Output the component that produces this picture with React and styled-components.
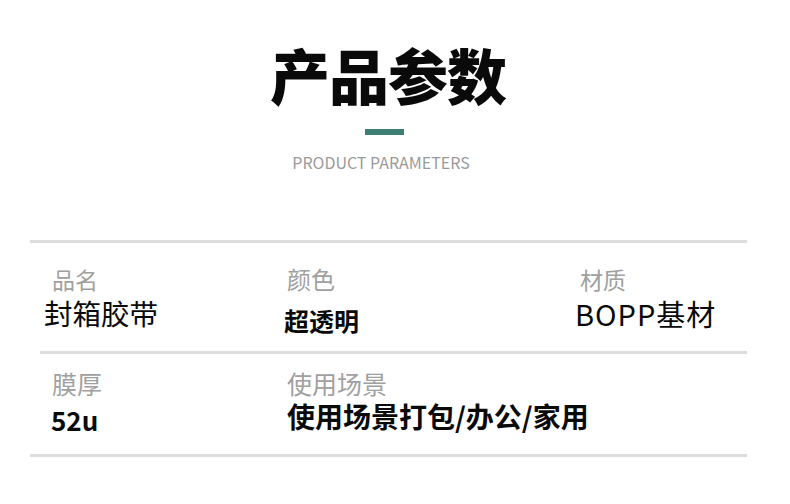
import React from "react";
import styled, { createGlobalStyle } from "styled-components";

const Global = createGlobalStyle`
  html, body { margin: 0; padding: 0; background: #ffffff; }
  body { font-family: "Noto Sans CJK SC", "Noto Sans", sans-serif; color: #111; }
`;

const Page = styled.div`
  width: 790px;
  height: 504px;
  background: #fff;
  overflow: hidden;
`;

const Header = styled.header`
  display: flex;
  flex-direction: column;
  align-items: center;
  padding: 44px 14px 0 0;
`;

const Title = styled.h1`
  margin: 0;
  font-size: 60px;
  line-height: 60px;
  font-weight: 900;
  color: #0a0a0a;
  letter-spacing: -1px;
`;

const Accent = styled.div`
  width: 39px;
  height: 6px;
  background: #3e7e74;
  margin: 25px 8px 0 0;
`;

const Subtitle = styled.div`
  margin: 17px 14px 0 0;
  font-size: 16px;
  line-height: 20px;
  font-weight: 400;
  color: #9a9a9a;
`;

const Table = styled.section`
  margin: 68px 0 0 30px;
  width: 717px;
`;

const Divider = styled.div`
  height: 3px;
  background: #dddddd;
  margin-left: ${(p) => p.$shift || 0}px;
`;

const Row = styled.div`
  display: grid;
  grid-template-columns: 257px 293px 1fr;
  height: ${(p) => p.$h}px;
  padding-top: ${(p) => p.$pt}px;
  box-sizing: border-box;
`;

const Cell = styled.div`
  display: flex;
  flex-direction: column;
  align-items: flex-start;
  grid-column: ${(p) => p.$span || "auto"};
`;

const Label = styled.div`
  font-size: ${(p) => p.$size || 23}px;
  line-height: 30px;
  color: #a0a0a0;
  font-weight: 400;
  white-space: nowrap;
  margin-left: ${(p) => p.$dx || 0}px;
`;

const Value = styled.div`
  font-size: ${(p) => p.$size || 28}px;
  line-height: 34px;
  font-weight: ${(p) => (p.$bold ? 700 : 400)};
  letter-spacing: ${(p) => p.$ls || 0}px;
  white-space: nowrap;
  color: #0a0a0a;
  margin-left: ${(p) => p.$dx || 0}px;
  margin-top: ${(p) => p.$dy || 0}px;
`;

export default function App() {
  return (
    <Page>
      <Global />
      <Header>
        <Title>产品参数</Title>
        <Accent />
        <Subtitle>PRODUCT PARAMETERS</Subtitle>
      </Header>
      <Table>
        <Divider />
        <Row $h={108} $pt={21}>
          <Cell>
            <Label $dx={22}>品名</Label>
            <Value $dx={14} $size={28.5} $dy={2}>封箱胶带</Value>
          </Cell>
          <Cell>
            <Label $size={24}>颜色</Label>
            <Value $size={25} $bold $dy={9} $dx={-3}>超透明</Value>
          </Cell>
          <Cell>
            <Label>材质</Label>
            <Value $dx={-5} $size={29} $ls={1} $dy={2}>BOPP基材</Value>
          </Cell>
        </Row>
        <Divider $shift={10} />
        <Row $h={100} $pt={14}>
          <Cell>
            <Label $dx={22} $size={25}>膜厚</Label>
            <Value $dx={21} $size={26} $bold $dy={5}>52u</Value>
          </Cell>
          <Cell $span="2 / 4">
            <Label $size={25}>使用场景</Label>
            <Value $size={28} $bold $dy={1}>使用场景打包/办公/家用</Value>
          </Cell>
        </Row>
        <Divider />
      </Table>
    </Page>
  );
}
